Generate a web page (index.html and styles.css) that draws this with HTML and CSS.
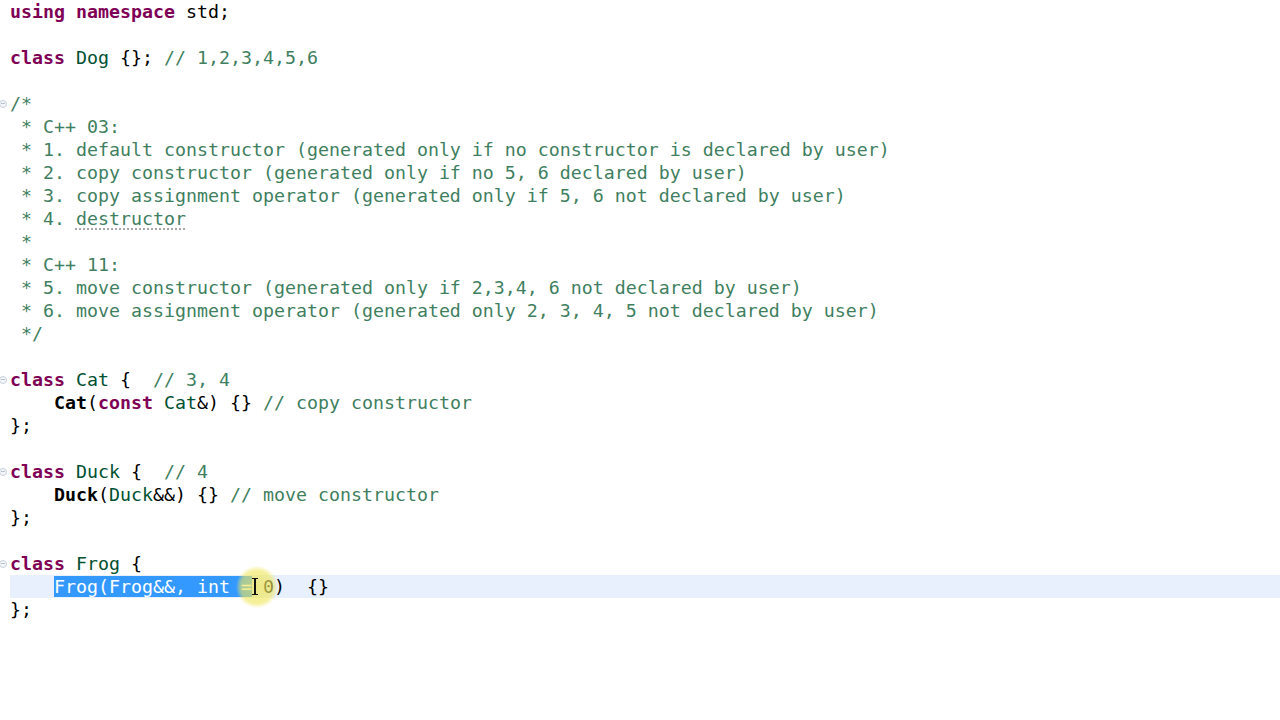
FILE: index.html
```html
<!DOCTYPE html>
<html>
<head>
<meta charset="utf-8">
<link rel="stylesheet" href="styles.css">
</head>
<body>
<div class="editor">
  <div class="line"><span class="gut"></span><span class="code"><span class="kw">using</span> <span class="kw">namespace</span> std;</span></div>
  <div class="line"><span class="gut"></span><span class="code"></span></div>
  <div class="line"><span class="gut"></span><span class="code"><span class="kw">class</span> <span class="ty">Dog</span> {}; <span class="cm">// 1,2,3,4,5,6</span></span></div>
  <div class="line"><span class="gut"></span><span class="code"></span></div>
  <div class="line"><span class="gut"><span class="fold"></span></span><span class="code cm">/*</span></div>
  <div class="line"><span class="gut"></span><span class="code cm"> * C++ 03:</span></div>
  <div class="line"><span class="gut"></span><span class="code cm"> * 1. default constructor (generated only if no constructor is declared by user)</span></div>
  <div class="line"><span class="gut"></span><span class="code cm"> * 2. copy constructor (generated only if no 5, 6 declared by user)</span></div>
  <div class="line"><span class="gut"></span><span class="code cm"> * 3. copy assignment operator (generated only if 5, 6 not declared by user)</span></div>
  <div class="line"><span class="gut"></span><span class="code cm"> * 4. <span class="spell">destructor</span></span></div>
  <div class="line"><span class="gut"></span><span class="code cm"> *</span></div>
  <div class="line"><span class="gut"></span><span class="code cm"> * C++ 11:</span></div>
  <div class="line"><span class="gut"></span><span class="code cm"> * 5. move constructor (generated only if 2,3,4, 6 not declared by user)</span></div>
  <div class="line"><span class="gut"></span><span class="code cm"> * 6. move assignment operator (generated only 2, 3, 4, 5 not declared by user)</span></div>
  <div class="line"><span class="gut"></span><span class="code cm"> */</span></div>
  <div class="line"><span class="gut"></span><span class="code"></span></div>
  <div class="line"><span class="gut"><span class="fold"></span></span><span class="code"><span class="kw">class</span> <span class="ty">Cat</span> {  <span class="cm">// 3, 4</span></span></div>
  <div class="line"><span class="gut"></span><span class="code">    <span class="fn">Cat</span>(<span class="kw">const</span> <span class="ty">Cat</span>&amp;) {} <span class="cm">// copy constructor</span></span></div>
  <div class="line"><span class="gut"></span><span class="code">};</span></div>
  <div class="line"><span class="gut"></span><span class="code"></span></div>
  <div class="line"><span class="gut"><span class="fold"></span></span><span class="code"><span class="kw">class</span> <span class="ty">Duck</span> {  <span class="cm">// 4</span></span></div>
  <div class="line"><span class="gut"></span><span class="code">    <span class="fn">Duck</span>(<span class="ty">Duck</span>&amp;&amp;) {} <span class="cm">// move constructor</span></span></div>
  <div class="line"><span class="gut"></span><span class="code">};</span></div>
  <div class="line"><span class="gut"></span><span class="code"></span></div>
  <div class="line"><span class="gut"><span class="fold"></span></span><span class="code"><span class="kw">class</span> <span class="ty">Frog</span> {</span></div>
  <div class="line"><span class="gut"></span><span class="code current">    <span class="sel">Frog(Frog&amp;&amp;, int =</span><span class="caret-wrap"><span class="halo"></span><span class="ibeam"></span></span> 0)  {}</span></div>
  <div class="line"><span class="gut"></span><span class="code">};</span></div>
</div>
</body>
</html>
```

FILE: styles.css
```css
html, body {
  margin: 0;
  padding: 0;
  background: #ffffff;
}

.editor {
  width: 1280px;
  height: 720px;
  overflow: hidden;
  font-family: "DejaVu Sans Mono", "Liberation Mono", monospace;
  font-size: 18.27px;
  color: #000000;
  box-sizing: border-box;
}

.line {
  display: flex;
  height: 23px;
  line-height: 23px;
}

.gut {
  width: 10px;
  flex: 0 0 10px;
  display: flex;
  align-items: center;
}

.fold {
  width: 8px;
  height: 8px;
  border: 1px solid #c9d2dc;
  border-radius: 50%;
  box-sizing: border-box;
  margin-left: -1px;
  position: relative;
  background: #f3f6f9;
}

.fold::after {
  content: "";
  position: absolute;
  left: 1px;
  right: 1px;
  top: 2.5px;
  height: 1px;
  background: #b7c2ce;
}

.code {
  flex: 1;
  white-space: pre;
}

.kw {
  color: #7f0055;
  font-weight: bold;
}

.ty {
  color: #005032;
}

.fn {
  font-weight: bold;
}

.cm {
  color: #3f7f5f;
}

.spell {
  text-decoration: underline dotted #a0a0a0;
  text-underline-offset: 4px;
}

.current {
  background: #e8f0fd;
}

.sel {
  background: #3399ff;
  color: #ffffff;
}

.caret-wrap {
  position: relative;
  display: inline-block;
  width: 0;
  height: 23px;
  vertical-align: top;
}

.halo {
  position: absolute;
  left: -16px;
  top: -9px;
  width: 42px;
  height: 42px;
  border-radius: 50%;
  background: radial-gradient(circle, rgba(240, 230, 90, 0.75) 0%, rgba(240, 230, 90, 0.6) 55%, rgba(240, 230, 90, 0) 72%);
}

.ibeam {
  position: absolute;
  left: 2px;
  top: 3px;
  width: 2px;
  height: 17px;
  background: #111111;
}

.ibeam::before,
.ibeam::after {
  content: "";
  position: absolute;
  left: -2px;
  width: 6px;
  height: 1px;
  background: #111111;
}

.ibeam::before {
  top: 0;
}

.ibeam::after {
  bottom: 0;
}
```
